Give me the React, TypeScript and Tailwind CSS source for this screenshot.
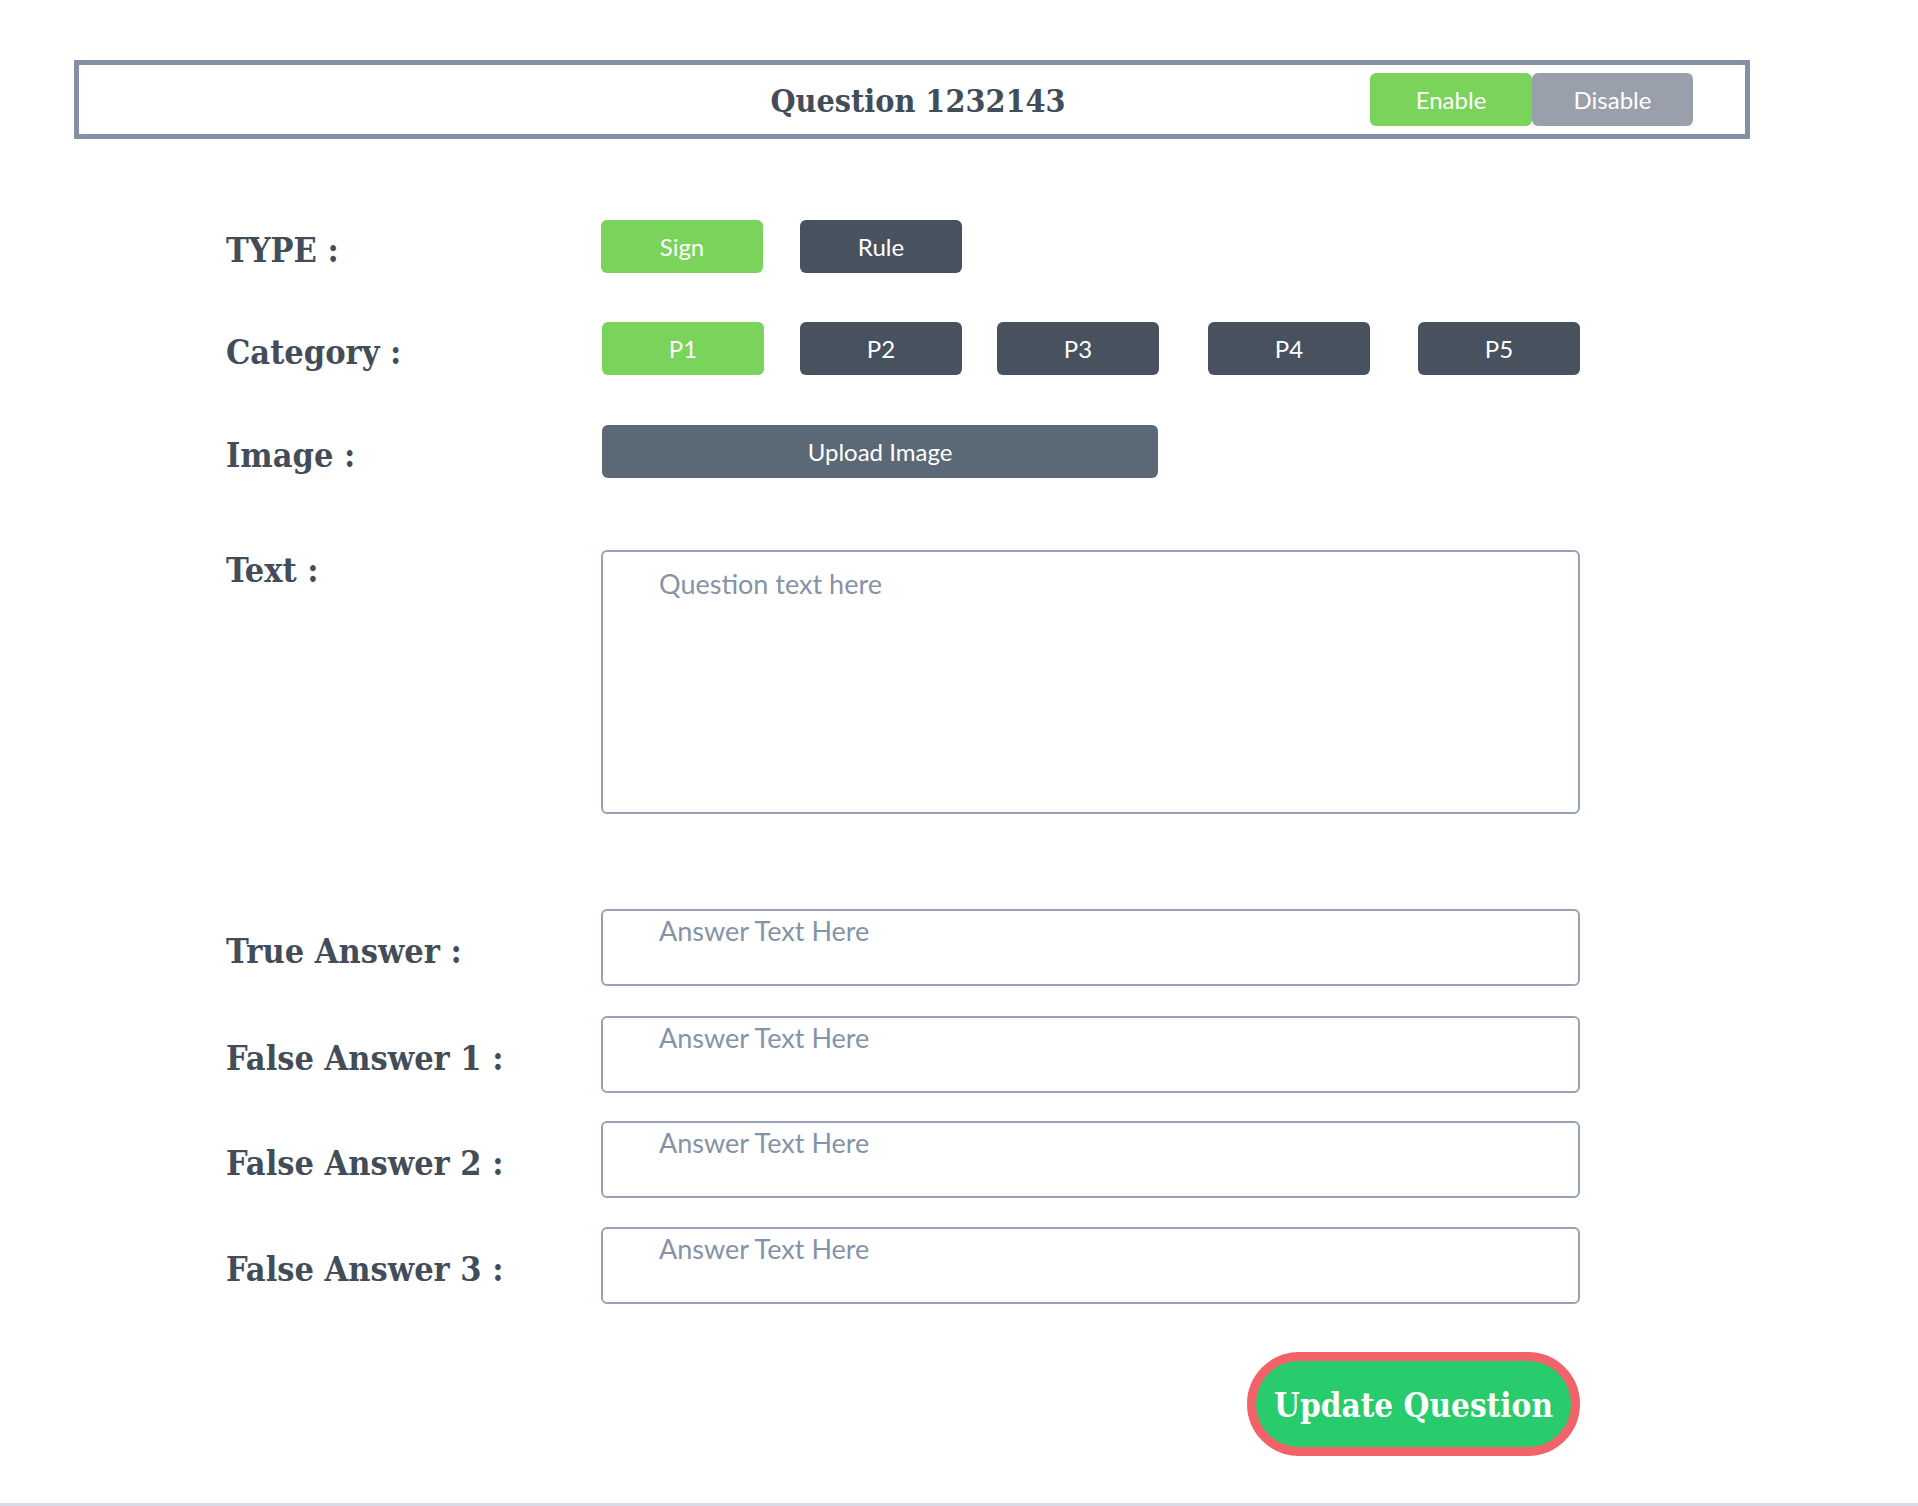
import React from "react";

const serif = "font-['DejaVu_Serif_Condensed','DejaVu_Serif',serif]";
const sans = "font-['Lato','Liberation_Sans',sans-serif]";

const Label = ({ children }: { children: React.ReactNode }) => (
  <div
    className={`w-[375px] shrink-0 pt-[6px] text-[34px] leading-[40px] font-bold text-[#434d59] ${serif}`}
  >
    {children}
  </div>
);

const PillButton = ({
  label,
  active = false,
  className = "",
}: {
  label: string;
  active?: boolean;
  className?: string;
}) => (
  <button
    className={`h-[53px] w-[162px] rounded-md text-[24px] text-white ${sans} ${
      active ? "bg-[#7ad35a]" : "bg-[#48525e]"
    } ${className}`}
  >
    {label}
  </button>
);

const AnswerRow = ({
  label,
  className = "",
}: {
  label: string;
  className?: string;
}) => (
  <div className={`flex items-center ${className}`}>
    <Label>{label}</Label>
    <div
      className={`h-[77px] w-[979px] rounded-md border-2 border-[#97a3b4] pl-[56px] text-[27px] text-[#8493a8] ${sans}`}
    >
      Answer Text Here
    </div>
  </div>
);

export default function App() {
  return (
    <div className="box-border h-[1506px] w-full border-b-[3px] border-[#d6dbe6] bg-white">
      {/* header */}
      <div className="pl-[74px] pt-[60px]">
        <div className="grid h-[79px] w-[1676px] grid-cols-[1fr_auto_1fr] items-center border-[5px] border-[#8390a5]">
          <div />
          <h1 className={`pl-[12px] pt-[3px] text-[32px] font-bold text-[#434d59] ${serif}`}>
            Question 1232143
          </h1>
          <div className="flex justify-end pr-[52px]">
            <button
              className={`h-[53px] w-[162px] rounded-md bg-[#7ad35a] text-[24px] text-white ${sans}`}
            >
              Enable
            </button>
            <button
              className={`h-[53px] w-[161px] rounded-md bg-[#99a0ab] text-[24px] text-white ${sans}`}
            >
              Disable
            </button>
          </div>
        </div>
      </div>

      <div className="pl-[226px]">
        {/* type */}
        <div className="mt-[81px] flex items-center">
          <Label>TYPE :</Label>
          <PillButton label="Sign" active />
          <PillButton label="Rule" className="ml-[37px]" />
        </div>

        {/* category */}
        <div className="mt-[49px] flex items-center">
          <Label>Category :</Label>
          <PillButton label="P1" active className="ml-px" />
          <PillButton label="P2" className="ml-[36px]" />
          <PillButton label="P3" className="ml-[35px]" />
          <PillButton label="P4" className="ml-[49px]" />
          <PillButton label="P5" className="ml-[48px]" />
        </div>

        {/* image */}
        <div className="mt-[50px] flex items-center">
          <Label>Image :</Label>
          <button
            className={`ml-px h-[53px] w-[556px] rounded-md bg-[#5b6875] text-[24px] text-white ${sans}`}
          >
            Upload Image
          </button>
        </div>

        {/* text */}
        <div className="mt-[72px] flex items-start">
          <div className="-mt-[6px]">
            <Label>Text :</Label>
          </div>
          <div
            className={`h-[264px] w-[979px] rounded-md border-2 border-[#97a3b4] pl-[56px] pt-[12px] text-[27px] text-[#8493a8] ${sans}`}
          >
            Question text here
          </div>
        </div>

        <AnswerRow label="True Answer :" className="mt-[95px]" />
        <AnswerRow label="False Answer 1 :" className="mt-[30px]" />
        <AnswerRow label="False Answer 2 :" className="mt-[28px]" />
        <AnswerRow label="False Answer 3 :" className="mt-[29px]" />

        <div className="mt-[48px] flex w-[1354px] justify-end">
          <button
            className={`h-[104px] w-[333px] rounded-full border-[9px] border-[#f26369] bg-[#28cc6c] pt-[3px] text-[33px] font-bold text-white ${serif}`}
          >
            Update Question
          </button>
        </div>
      </div>
    </div>
  );
}
